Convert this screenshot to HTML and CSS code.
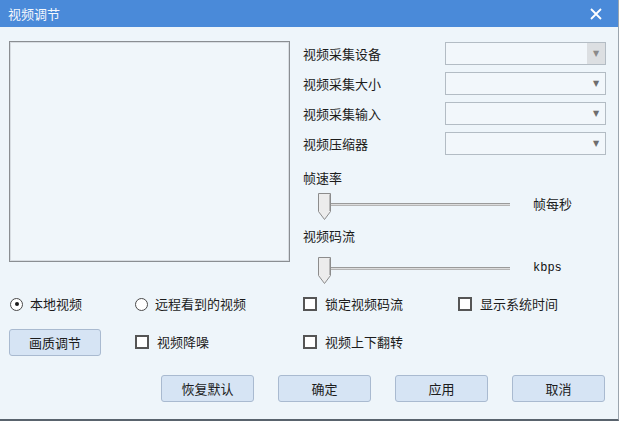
FILE: index.html
```html
<!DOCTYPE html>
<html lang="zh">
<head>
<meta charset="utf-8">
<link rel="stylesheet" href="styles.css">
</head>
<body>
<div class="window">
  <div class="titlebar">
    <span class="title">视频调节</span>
    <svg class="close" width="12" height="12" viewBox="0 0 12 12"><path d="M1 1L11 11M11 1L1 11" stroke="#fff" stroke-width="1.8"/></svg>
  </div>
  <div class="content">
    <div class="top">
      <div class="preview"></div>
      <div class="panel">
        <div class="selects">
          <div class="row"><span class="label">视频采集设备</span><div class="select disabled"><span class="arrow">▼</span></div></div>
          <div class="row"><span class="label">视频采集大小</span><div class="select"><span class="arrow">▼</span></div></div>
          <div class="row"><span class="label">视频采集输入</span><div class="select"><span class="arrow">▼</span></div></div>
          <div class="row"><span class="label">视频压缩器</span><div class="select"><span class="arrow">▼</span></div></div>
        </div>
        <div class="label caption first">帧速率</div>
        <div class="slider s1">
          <div class="track-wrap">
            <div class="track"></div>
            <svg class="thumb" width="14" height="28" viewBox="0 0 14 28"><path d="M0.5 0.5H12.5V18.5L6.5 26.5L0.5 18.5Z" fill="#ececec" stroke="#8c8c8c"/><path d="M11.5 1.5V18" stroke="#b8b8b8"/></svg>
          </div>
          <span class="unit">帧每秒</span>
        </div>
        <div class="label caption second">视频码流</div>
        <div class="slider s2">
          <div class="track-wrap">
            <div class="track"></div>
            <svg class="thumb" width="14" height="28" viewBox="0 0 14 28"><path d="M0.5 0.5H12.5V18.5L6.5 26.5L0.5 18.5Z" fill="#ececec" stroke="#8c8c8c"/><path d="M11.5 1.5V18" stroke="#b8b8b8"/></svg>
          </div>
          <span class="unit mono">kbps</span>
        </div>
      </div>
    </div>
    <div class="options">
      <label class="opt"><span class="radio checked"></span>本地视频</label>
      <label class="opt"><span class="radio"></span>远程看到的视频</label>
      <label class="opt"><span class="check"></span>锁定视频码流</label>
      <label class="opt"><span class="check"></span>显示系统时间</label>
      <div class="opt"><button class="btn small">画质调节</button></div>
      <label class="opt"><span class="check"></span>视频降噪</label>
      <label class="opt"><span class="check"></span>视频上下翻转</label>
    </div>
    <div class="buttons">
      <button class="btn">恢复默认</button>
      <button class="btn">确定</button>
      <button class="btn">应用</button>
      <button class="btn">取消</button>
    </div>
  </div>
</div>
</body>
</html>
```
FILE: styles.css
```css
* { box-sizing: border-box; }
html, body { margin: 0; padding: 0; background: #ffffff; }
body {
  font-family: "Noto Sans CJK SC", "Noto Sans", sans-serif;
  font-size: 13px;
  color: #1c1c1c;
}
.window {
  width: 619px;
  height: 421px;
  display: flex;
  flex-direction: column;
  background: #eef5fa;
  border-right: 1px solid #9ba5ae;
  border-bottom: 2px solid #59636d;
}
.titlebar {
  height: 27px;
  flex: none;
  background: #4a8ad9;
  display: flex;
  align-items: center;
  justify-content: space-between;
  padding: 0 16px 0 8px;
  color: #fff;
}
.title { font-size: 13px; line-height: 1; color: #f4f8fd; }
.close { display: block; }
.content { flex: 1; display: flex; flex-direction: column; }
.top {
  display: flex;
  padding: 14px 0 0 9px;
  height: 249px;
}
.preview {
  width: 281px;
  height: 221px;
  border: 1px solid #8a8e92;
  background: #f0f6fa;
  box-shadow: inset 0 0 0 1px #d8dde2;
}
.panel {
  margin-left: 13px;
  display: flex;
  flex-direction: column;
  width: 310px;
}
.selects {
  margin-top: 1px;
  display: flex;
  flex-direction: column;
  gap: 7px;
}
.row {
  height: 23px;
  display: flex;
  align-items: center;
}
.label { line-height: 20px; white-space: nowrap; }
.row .label { width: 142px; }
.select {
  width: 161px;
  height: 23px;
  border: 1px solid #b3bcc4;
  background: #f2f7fb;
  display: flex;
  justify-content: flex-end;
  align-items: center;
}
.arrow {
  width: 18px;
  height: 21px;
  display: flex;
  align-items: center;
  justify-content: center;
  font-size: 8px;
  color: #6e6e6e;
  font-family: "DejaVu Sans", sans-serif;
}
.select.disabled .arrow { background: #dcdfe2; color: #8a8a8a; }
.caption.first { margin-top: 13px; }
.caption.second { margin-top: 5px; }
.slider {
  display: flex;
  align-items: flex-start;
  height: 28px;
}
.s1 { margin-top: 5px; }
.s2 { margin-top: 11px; }
.track-wrap {
  position: relative;
  width: 192px;
  height: 28px;
  margin-left: 15px;
}
.track {
  position: absolute;
  left: 13px;
  right: 0;
  top: 10px;
  height: 3px;
  background: #dcdcdc;
  border-top: 1px solid #9a9a9a;
  border-bottom: 1px solid #b5b5b5;
}
.thumb { position: absolute; left: 0; top: 0; }
.unit {
  margin-left: 23px;
  line-height: 22px;
  font-size: 13px;
}
.unit.mono {
  font-family: "Liberation Mono", "Courier New", monospace;
  font-weight: normal;
  font-size: 12px;
  color: #111;
}
.options {
  margin-top: 13px;
  display: grid;
  grid-template-columns: 125px 168px 155px 150px;
  grid-template-rows: 30px 30px;
  row-gap: 8px;
  padding-left: 10px;
  align-items: center;
}
.opt {
  display: flex;
  align-items: center;
  white-space: nowrap;
  line-height: 20px;
}
.radio {
  width: 13px;
  height: 13px;
  border: 1.5px solid #4a4a4a;
  border-radius: 50%;
  margin-right: 7px;
  background: #fff;
  display: flex;
  align-items: center;
  justify-content: center;
}
.radio.checked::after {
  content: "";
  width: 4px;
  height: 4px;
  border-radius: 50%;
  background: #1a1a1a;
}
.check {
  width: 14px;
  height: 14px;
  border: 2px solid #555;
  background: #fff;
  margin-right: 8px;
}
.btn {
  font-family: inherit;
  font-size: 13px;
  color: #1c1c1c;
  width: 93px;
  height: 27px;
  border: 1px solid #a9bad0;
  border-radius: 3px;
  background: #d6e4f4;
  padding: 0;
}
.btn.small { width: 92px; margin-left: -1px; }
.buttons {
  display: flex;
  gap: 24px;
  padding-left: 161px;
  margin-top: 18px;
}
```
